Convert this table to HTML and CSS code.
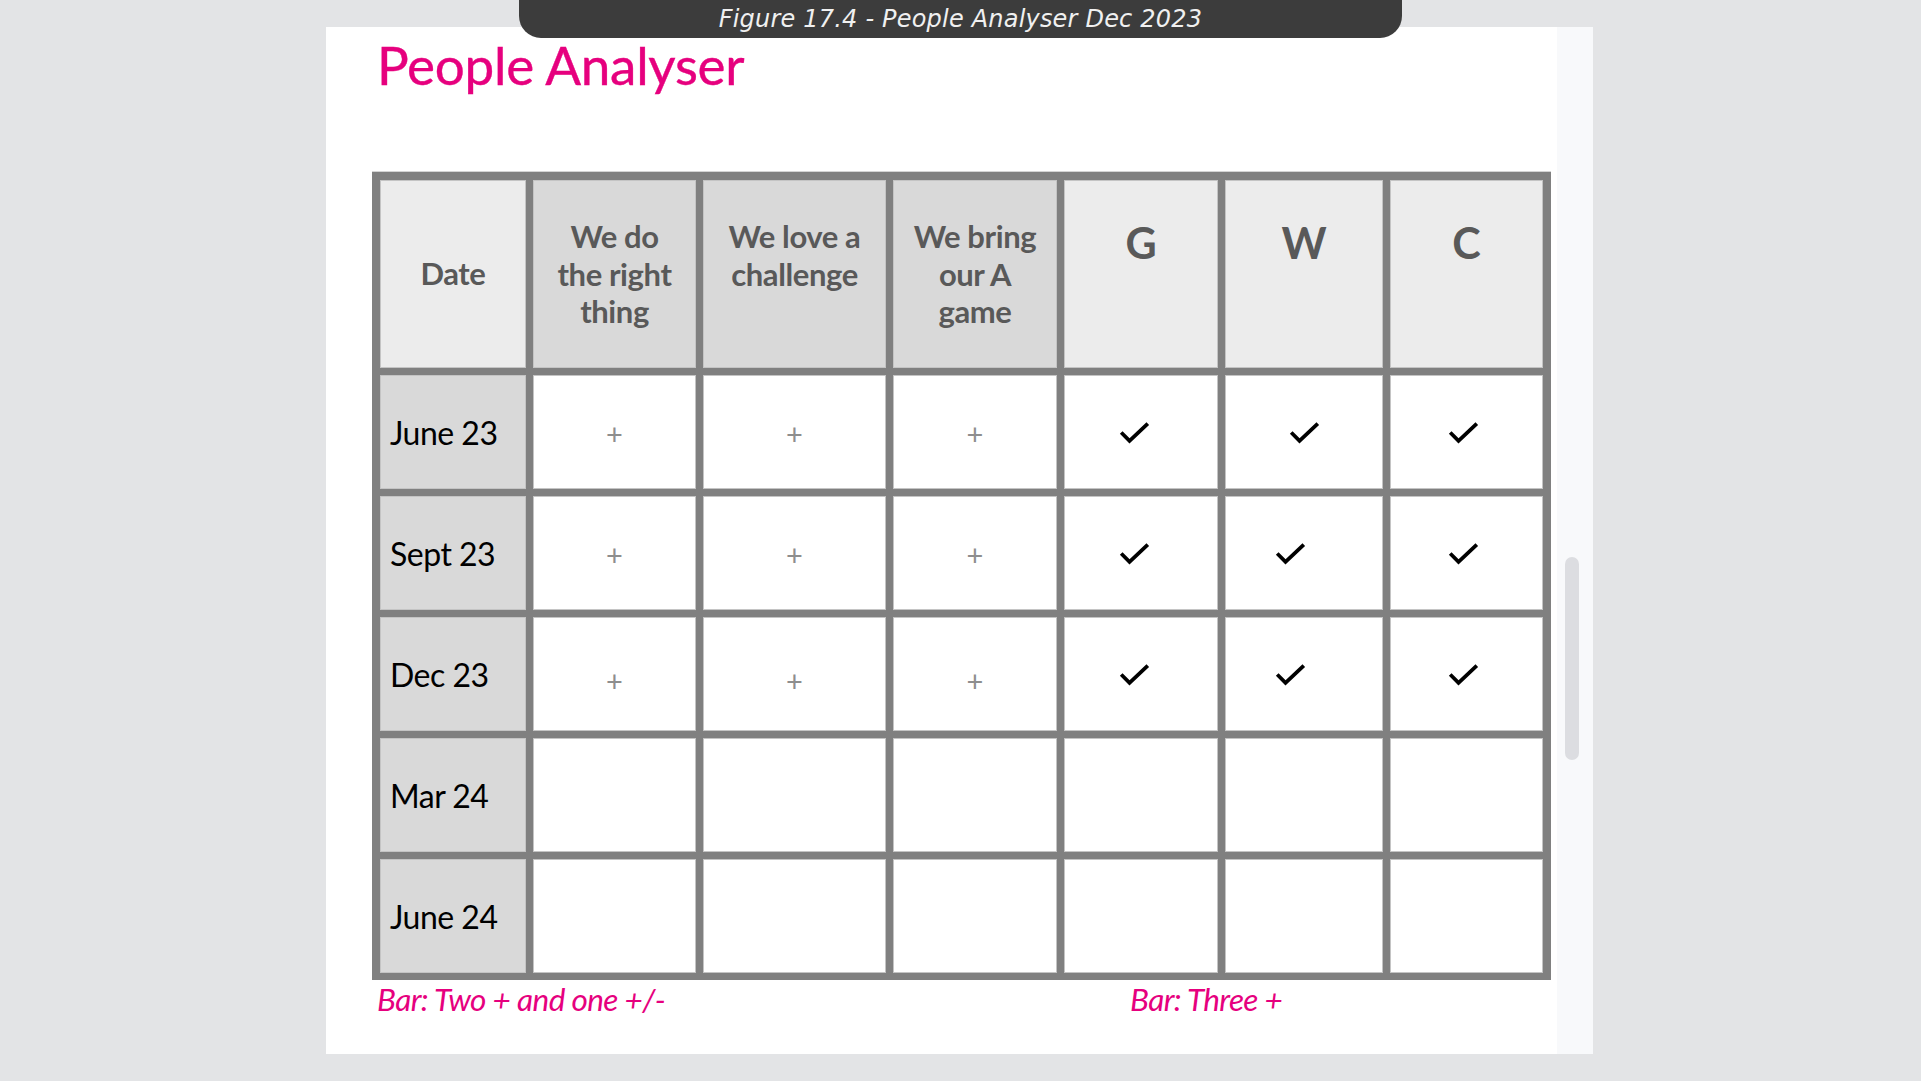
FILE: index.html
```html
<!DOCTYPE html>
<html lang="en">
<head>
<meta charset="utf-8">
<title>People Analyser</title>
<link rel="stylesheet" href="styles.css">
</head>
<body>
<div class="viewer">
  <div class="page">
    <h1 class="title">People Analyser</h1>
    <div class="analyser">
      <div class="cell head head-light head-date">Date</div>
      <div class="cell head head-dark">We do<br>the right<br>thing</div>
      <div class="cell head head-dark">We love a<br>challenge</div>
      <div class="cell head head-dark">We bring<br>our A<br>game</div>
      <div class="cell head head-light head-letter">G</div>
      <div class="cell head head-light head-letter">W</div>
      <div class="cell head head-light head-letter">C</div>

      <div class="cell date">June 23</div>
      <div class="cell mark plus">+</div>
      <div class="cell mark plus">+</div>
      <div class="cell mark plus">+</div>
      <div class="cell mark"><svg class="tick tick-g" viewBox="0 0 28 22"><path d="M2 11 L9.5 18.5 L26 3"/></svg></div>
      <div class="cell mark"><svg class="tick" viewBox="0 0 28 22"><path d="M2 11 L9.5 18.5 L26 3"/></svg></div>
      <div class="cell mark"><svg class="tick tick-c" viewBox="0 0 28 22"><path d="M2 11 L9.5 18.5 L26 3"/></svg></div>

      <div class="cell date">Sept 23</div>
      <div class="cell mark plus">+</div>
      <div class="cell mark plus">+</div>
      <div class="cell mark plus">+</div>
      <div class="cell mark"><svg class="tick tick-g" viewBox="0 0 28 22"><path d="M2 11 L9.5 18.5 L26 3"/></svg></div>
      <div class="cell mark"><svg class="tick tick-w" viewBox="0 0 28 22"><path d="M2 11 L9.5 18.5 L26 3"/></svg></div>
      <div class="cell mark"><svg class="tick tick-c" viewBox="0 0 28 22"><path d="M2 11 L9.5 18.5 L26 3"/></svg></div>

      <div class="cell date">Dec 23</div>
      <div class="cell mark plus low">+</div>
      <div class="cell mark plus low">+</div>
      <div class="cell mark plus low">+</div>
      <div class="cell mark"><svg class="tick tick-g" viewBox="0 0 28 22"><path d="M2 11 L9.5 18.5 L26 3"/></svg></div>
      <div class="cell mark"><svg class="tick tick-w" viewBox="0 0 28 22"><path d="M2 11 L9.5 18.5 L26 3"/></svg></div>
      <div class="cell mark"><svg class="tick tick-c" viewBox="0 0 28 22"><path d="M2 11 L9.5 18.5 L26 3"/></svg></div>

      <div class="cell date">Mar 24</div>
      <div class="cell"></div>
      <div class="cell"></div>
      <div class="cell"></div>
      <div class="cell"></div>
      <div class="cell"></div>
      <div class="cell"></div>

      <div class="cell date">June 24</div>
      <div class="cell"></div>
      <div class="cell"></div>
      <div class="cell"></div>
      <div class="cell"></div>
      <div class="cell"></div>
      <div class="cell"></div>
    </div>
    <div class="captions">
      <span class="caption">Bar: Two + and one +/-</span>
      <span class="caption">Bar: Three +</span>
    </div>
  </div>
  <div class="track"><div class="thumb"></div></div>
</div>
<div class="banner">Figure 17.4 - People Analyser Dec 2023</div>
</body>
</html>
```

FILE: styles.css
```css
* { box-sizing: border-box; }

html, body {
  margin: 0;
  padding: 0;
}

body {
  width: 1921px;
  height: 1081px;
  overflow: hidden;
  background: #e3e4e6;
  font-family: "Lato", "Liberation Sans", sans-serif;
  position: relative;
}

.viewer {
  display: flex;
  padding: 27px 0 0 326px;
}

.page {
  width: 1231px;
  height: 1027px;
  background: #ffffff;
  padding: 3px 0 0 46px;
}

.track {
  width: 36px;
  height: 1027px;
  background: #f8f9fb;
  padding: 530px 0 0 8px;
}

.thumb {
  width: 14px;
  height: 203px;
  border-radius: 7px;
  background: #dcdde1;
}

.banner {
  position: absolute;
  left: 519px;
  top: 0;
  width: 883px;
  height: 38px;
  background: #3c3c3c;
  border-radius: 0 0 22px 22px;
  color: #f0f0f0;
  font-family: "DejaVu Sans", "Open Sans", sans-serif;
  font-style: italic;
  font-size: 24px;
  letter-spacing: 0.2px;
  display: flex;
  align-items: center;
  justify-content: center;
  padding-bottom: 1px;
}

.title {
  margin: 0 0 0 5px;
  height: 142px;
  font-family: "Lato", sans-serif;
  font-weight: 400;
  font-size: 53px;
  line-height: 62px;
  color: #e6007e;
  padding-top: 4px;
  letter-spacing: -0.3px;
  -webkit-text-stroke: 0.4px #e6007e;
}

.analyser {
  display: grid;
  grid-template-columns: 146px 163px 183px 164px 154px 158px 153px;
  grid-template-rows: 188px repeat(5, 114px);
  gap: 7px;
  padding: 8px 8px 7px 8px;
  background: #808080;
  width: 1179px;
  box-shadow: 0 -1px 0 #d4d4d4;
}

.cell {
  background: #ffffff;
  border: 1px solid #c4c4c4;
}

.head {
  color: #595959;
  font-weight: 700;
  font-size: 31px;
  line-height: 37.5px;
  text-align: center;
  padding-top: 37px;
  letter-spacing: -0.4px;
}

.head-light { background: #ececec; }
.head-dark { background: #d9d9d9; }

.head-date {
  padding-top: 0;
  display: flex;
  align-items: center;
  justify-content: center;
}

.head-letter {
  font-size: 43px;
  line-height: 50px;
  letter-spacing: 0;
}

.date {
  background: #d9d9d9;
  color: #000000;
  font-size: 32px;
  display: flex;
  align-items: center;
  padding-left: 9px;
  letter-spacing: -0.5px;
}

.mark {
  display: flex;
  align-items: center;
  justify-content: center;
}

.plus {
  color: #8e8e8e;
  font-size: 29px;
  font-weight: 400;
  padding-top: 3px;
}

.plus.low { padding-top: 12px; }

.tick {
  width: 31px;
  height: 25px;
  fill: none;
  stroke: #000000;
  stroke-width: 3.4;
  stroke-linejoin: miter;
  stroke-linecap: butt;
}

.tick-g { margin-right: 14px; }
.tick-w { margin-right: 28px; }
.tick-c { margin-right: 6px; }

.captions {
  display: grid;
  grid-template-columns: 753px auto;
  padding-left: 5px;
  margin-top: 1px;
}

.caption {
  color: #e6007e;
  font-style: italic;
  font-size: 31.5px;
  line-height: 36px;
  letter-spacing: -0.6px;
}
```
